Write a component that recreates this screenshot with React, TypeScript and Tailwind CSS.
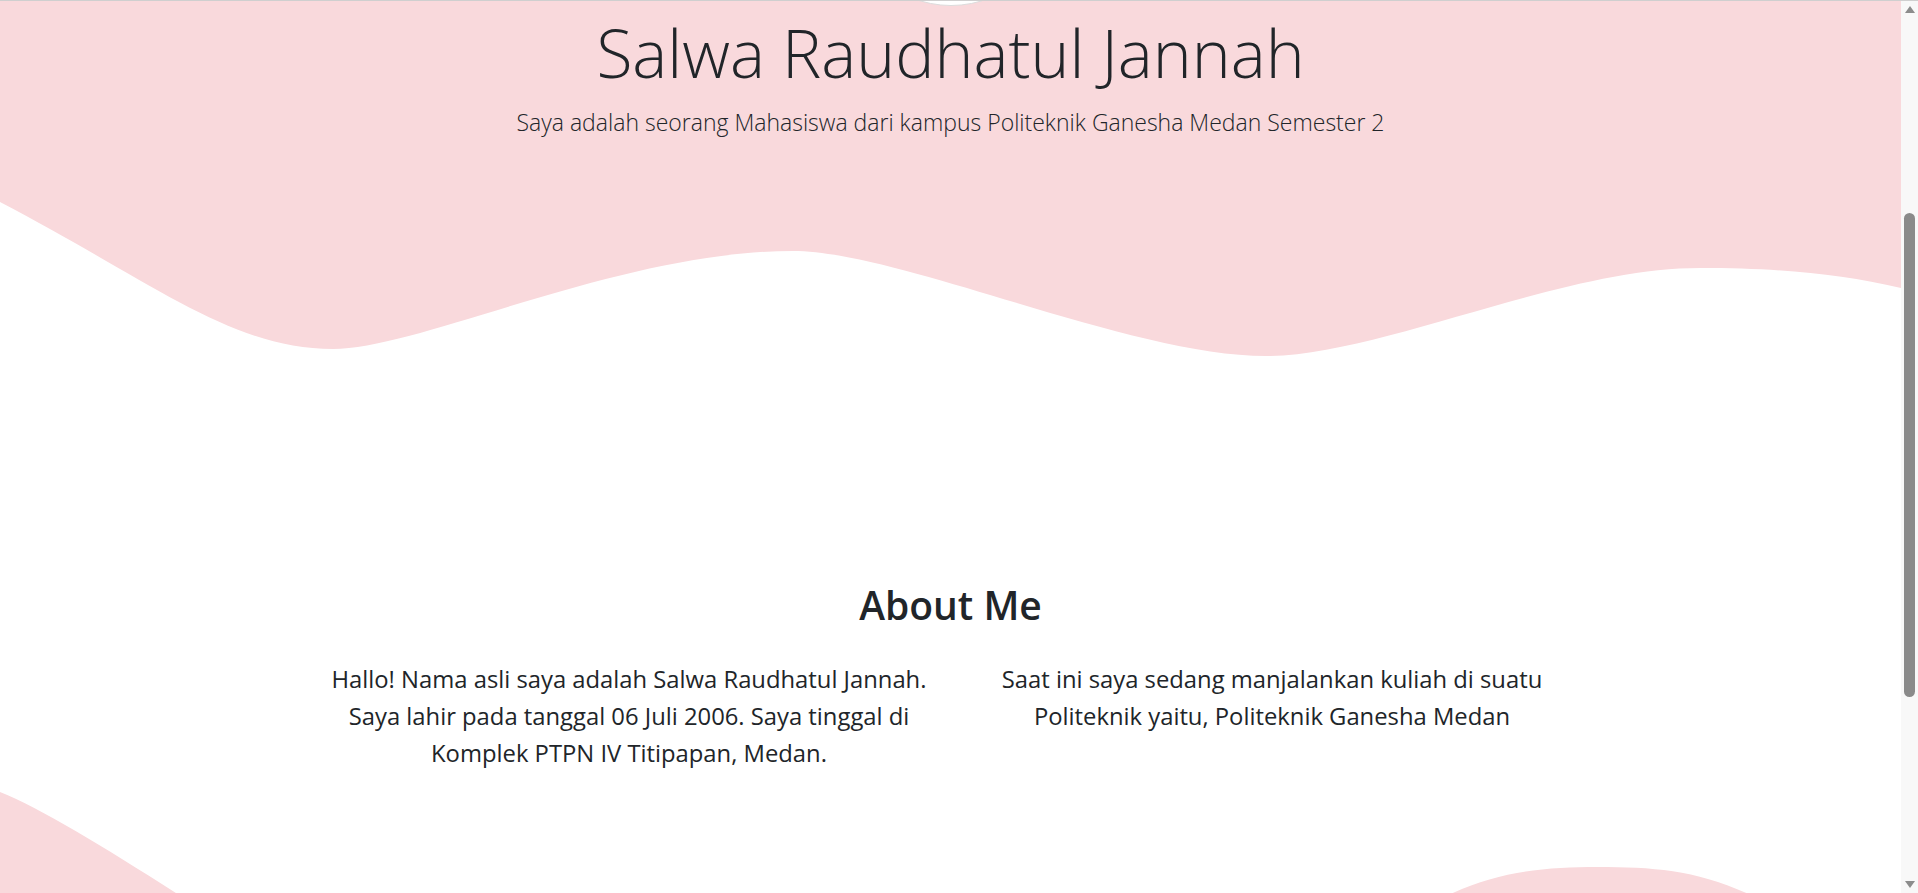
import React from "react";

const PINK = "#f9d9dc";

function TopWave() {
  return (
    <svg
      className="block w-full h-[160px]"
      viewBox="0 0 1901 160"
      preserveAspectRatio="none"
      aria-hidden="true"
    >
      <path
        fill={PINK}
        d="M0,0 C150,78 230,147 333,147 C420,147 620,49 793,49 C900,49 1130,154 1266,154 C1380,154 1560,66 1700,66 C1780,66 1840,72 1901,86 L1901,0 L0,0 Z"
      />
    </svg>
  );
}

function BottomWave() {
  return (
    <svg
      className="block w-full h-[101px]"
      viewBox="0 0 1901 101"
      preserveAspectRatio="none"
      aria-hidden="true"
    >
      <path
        fill={PINK}
        d="M0,0 C150,60 600,420 800,420 C1000,420 1240,346 1300,250 C1400,90 1500,75 1597,75 C1670,75 1720,80 1800,130 C1850,160 1880,200 1901,230 L1901,420 L0,420 Z"
      />
    </svg>
  );
}

function Scrollbar() {
  return (
    <div className="w-[17px] shrink-0 bg-[#f8f8f8] flex flex-col">
      <div className="h-[17px] flex items-center justify-center">
        <svg width="10" height="7" viewBox="0 0 10 7">
          <polygon points="5,0 10,7 0,7" fill="#8c8c8c" />
        </svg>
      </div>
      <div className="mt-[195px] mx-auto w-[11px] h-[484px] rounded-full bg-[#8a8a8a]" />
      <div className="flex-1" />
      <div className="h-[17px] flex items-center justify-center">
        <svg width="10" height="7" viewBox="0 0 10 7">
          <polygon points="0,0 10,0 5,7" fill="#8c8c8c" />
        </svg>
      </div>
    </div>
  );
}

export default function App() {
  return (
    <div className="h-screen w-full overflow-hidden flex flex-col bg-white text-[#212529] font-['Open_Sans','Noto_Sans',sans-serif]">
      <div className="h-px bg-[#cfcfcf] shrink-0" />
      <div className="flex-1 flex min-h-0">
        <main className="flex-1 flex flex-col min-w-0">
          <header className="h-[201px] bg-[#f9d9dc] flex flex-col items-center">
            <div className="h-[5px] overflow-hidden">
              <div className="mt-[-205px] w-[210px] h-[210px] rounded-full bg-white border border-[#dcdcdc]" />
            </div>
            <h1 className="mt-[13px] text-[66px] leading-none font-light">
              Salwa Raudhatul Jannah
            </h1>
            <p className="mt-[26px] text-[23px] leading-none font-light">
              Saya adalah seorang Mahasiswa dari kampus Politeknik Ganesha Medan Semester 2
            </p>
          </header>
          <TopWave />

          <section className="mt-[223px] flex flex-col items-center">
            <h2 className="text-[39px] leading-none font-semibold">About Me</h2>
            <div className="mt-[37px] w-[1286px] grid grid-cols-2 text-[23.8px] leading-[37px] text-center">
              <p>
                Hallo! Nama asli saya adalah Salwa Raudhatul Jannah.
                <br />
                Saya lahir pada tanggal 06 Juli 2006. Saya tinggal di
                <br />
                Komplek PTPN IV Titipapan, Medan.
              </p>
              <p>
                Saat ini saya sedang manjalankan kuliah di suatu
                <br />
                Politeknik yaitu, Politeknik Ganesha Medan
              </p>
            </div>
          </section>

          <div className="mt-auto">
            <BottomWave />
          </div>
        </main>
        <Scrollbar />
      </div>
    </div>
  );
}
